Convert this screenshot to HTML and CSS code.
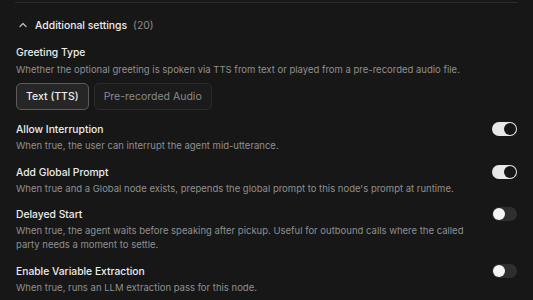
FILE: index.html
```html
<!DOCTYPE html>
<html lang="en">
<head>
  <meta charset="UTF-8">
  <meta name="viewport" content="width=device-width, initial-scale=1.0">
  <link rel="stylesheet" href="styles.css">
  <title>Node settings</title>
</head>
<body>
  <div class="panel">
    <div class="divider"></div>

    <div class="section-header">
      <svg class="chevron" width="10" height="10" viewBox="0 0 10 10">
        <path d="M2 6.5 L5 3.5 L8 6.5" fill="none" stroke="#bdbdbd" stroke-width="1.3" stroke-linecap="round" stroke-linejoin="round"/>
      </svg>
      <span class="section-title">Additional settings</span>
      <span class="section-count">(20)</span>
    </div>

    <div class="field">
      <div class="field-label">Greeting Type</div>
      <div class="field-desc">Whether the optional greeting is spoken via TTS from text or played from a pre-recorded audio file.</div>
      <div class="segmented">
        <button class="seg active">Text (TTS)</button>
        <button class="seg">Pre-recorded Audio</button>
      </div>
    </div>

    <div class="setting">
      <div class="setting-text">
        <div class="field-label">Allow Interruption</div>
        <div class="field-desc">When true, the user can interrupt the agent mid-utterance.</div>
      </div>
      <div class="toggle on"><span class="knob"></span></div>
    </div>

    <div class="setting">
      <div class="setting-text">
        <div class="field-label">Add Global Prompt</div>
        <div class="field-desc">When true and a Global node exists, prepends the global prompt to this node's prompt at runtime.</div>
      </div>
      <div class="toggle on"><span class="knob"></span></div>
    </div>

    <div class="setting">
      <div class="setting-text">
        <div class="field-label">Delayed Start</div>
        <div class="field-desc">When true, the agent waits before speaking after pickup. Useful for outbound calls where the called party needs a moment to settle.</div>
      </div>
      <div class="toggle"><span class="knob"></span></div>
    </div>

    <div class="setting">
      <div class="setting-text">
        <div class="field-label">Enable Variable Extraction</div>
        <div class="field-desc">When true, runs an LLM extraction pass for this node.</div>
      </div>
      <div class="toggle"><span class="knob"></span></div>
    </div>
  </div>
</body>
</html>
```

FILE: styles.css
```css
body {
  margin: 0;
  background-color: #171717;
  font-family: Inter, "Noto Sans", sans-serif;
  color: #e8e8e8;
  overflow: hidden;
}

.panel {
  padding: 2px 16px 0 16px;
}

.divider {
  height: 1px;
  background-color: #2b2b2b;
  margin: 0 -1px;
}

/* header of the collapsible block */
.section-header {
  display: flex;
  align-items: center;
  height: 16px;
  margin-top: 14px;
  font-size: 10.4px;
  font-weight: 500;
}

.chevron {
  margin-left: 2px;
  margin-right: 7px;
}

.section-title {
  color: #ececec;
}

.section-count {
  color: #8c8c8c;
  font-weight: 400;
  margin-left: 6px;
}

.field {
  margin-top: 11px;
}

.field-label {
  font-size: 10.3px;
  font-weight: 500;
  line-height: 16px;
  color: #ececec;
}

.field-desc {
  font-size: 9.5px;
  line-height: 14px;
  color: #8f8f8f;
  margin-top: 2px;
}

.field .field-desc {
  margin-top: 3px;
}

.segmented {
  display: flex;
  gap: 5px;
  margin-top: 6px;
}

.seg {
  font-family: Inter, "Noto Sans", sans-serif;
  font-size: 10.5px;
  height: 27px;
  padding: 0 9px;
  border-radius: 5px;
  border: 1px solid #2c2c2c;
  background-color: #1b1b1b;
  color: #8a8a8a;
}

.seg.active {
  border-color: #5c5c5c;
  background-color: #262626;
  color: #ededed;
  font-weight: 500;
}

/* rows with a switch */
.setting {
  display: flex;
  justify-content: space-between;
  align-items: flex-start;
  margin-top: 10.5px;
}

.field + .setting {
  margin-top: 11px;
}

.setting-text {
  flex: 1;
  padding-right: 20px;
}

.toggle {
  width: 25px;
  height: 14px;
  border-radius: 7px;
  background-color: #2e2e2e;
  margin-top: 1px;
  position: relative;
  flex-shrink: 0;
}

.toggle .knob {
  position: absolute;
  top: 1px;
  left: 1px;
  width: 12px;
  height: 12px;
  border-radius: 50%;
  background-color: #f5f5f5;
}

.toggle.on {
  background-color: #e8e8e8;
}

.toggle.on .knob {
  left: 12px;
  background-color: #161616;
}
```
